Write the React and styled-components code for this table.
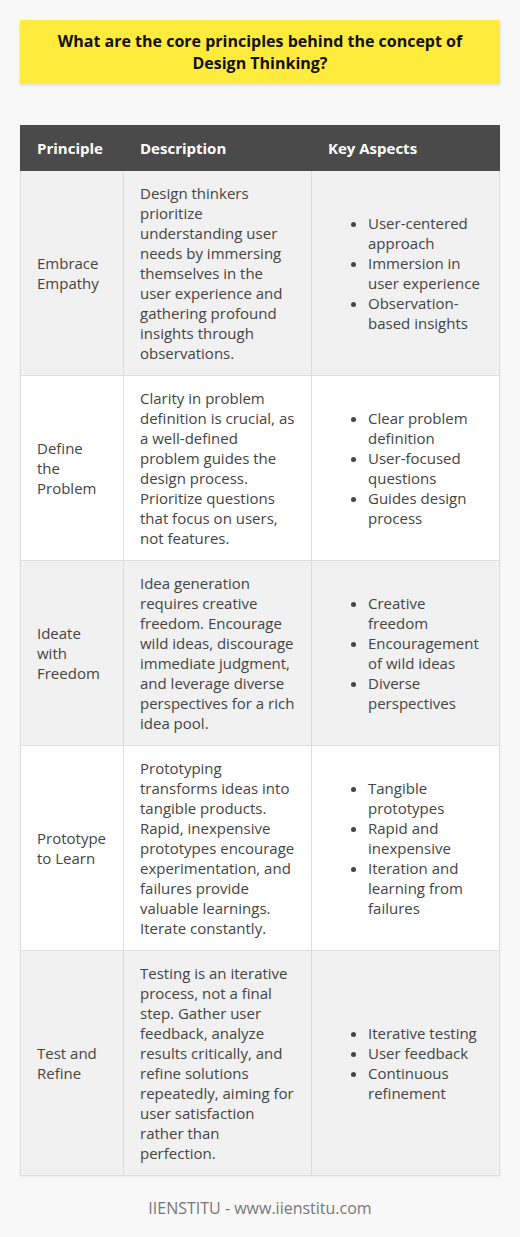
import styled, { createGlobalStyle } from "styled-components";

const GlobalStyle = createGlobalStyle`
  body {
    margin: 0;
    background: #f8f8f8;
    font-family: "Open Sans", "Liberation Sans", sans-serif;
    color: #444;
  }
`;

const Page = styled.div`
  padding: 20px 20px 0;
`;

const Title = styled.h1`
  margin: 0;
  padding: 10px 16px;
  background: #ffeb3b;
  color: #111;
  font-size: 16px;
  line-height: 22px;
  font-weight: 700;
  text-align: center;
  box-shadow: 0 1px 3px rgba(0, 0, 0, 0.12);
`;

const Table = styled.table`
  width: 100%;
  margin-top: 41px;
  border-collapse: collapse;
  font-size: 15px;
  line-height: 20px;
  box-shadow: 0 1px 3px rgba(0, 0, 0, 0.06);

  th,
  td {
    border: 1px solid #ddd;
    text-align: left;
    vertical-align: middle;
  }

  th {
    background: #4a4a4a;
    color: #fff;
    font-weight: 700;
    padding: 12px 16px;
    border-color: #4a4a4a;
    border-left-color: #e6e6e6;
  }

  th:first-child {
    border-left-color: #4a4a4a;
  }

  td {
    padding: 12px 16px;
  }
`;

const Row = styled.tr`
  background: ${(p) => (p.$shade ? "#f1f1f1" : "#fff")};
`;

const Aspects = styled.ul`
  margin: 0;
  padding-left: 40px;
`;

const Footer = styled.div`
  padding: 21px 0 20px;
  text-align: center;
  color: #777;
  font-size: 16px;
  line-height: 22px;
`;

const rows = [
  {
    principle: "Embrace Empathy",
    description:
      "Design thinkers prioritize understanding user needs by immersing themselves in the user experience and gathering profound insights through observations.",
    aspects: ["User-centered approach", "Immersion in user experience", "Observation-based insights"],
  },
  {
    principle: "Define the Problem",
    description:
      "Clarity in problem definition is crucial, as a well-defined problem guides the design process. Prioritize questions that focus on users, not features.",
    aspects: ["Clear problem definition", "User-focused questions", "Guides design process"],
  },
  {
    principle: "Ideate with Freedom",
    description:
      "Idea generation requires creative freedom. Encourage wild ideas, discourage immediate judgment, and leverage diverse perspectives for a rich idea pool.",
    aspects: ["Creative freedom", "Encouragement of wild ideas", "Diverse perspectives"],
  },
  {
    principle: "Prototype to Learn",
    description:
      "Prototyping transforms ideas into tangible products. Rapid, inexpensive prototypes encourage experimentation, and failures provide valuable learnings. Iterate constantly.",
    aspects: ["Tangible prototypes", "Rapid and inexpensive", "Iteration and learning from failures"],
  },
  {
    principle: "Test and Refine",
    description:
      "Testing is an iterative process, not a final step. Gather user feedback, analyze results critically, and refine solutions repeatedly, aiming for user satisfaction rather than perfection.",
    aspects: ["Iterative testing", "User feedback", "Continuous refinement"],
  },
];

export default function App() {
  return (
    <Page>
      <GlobalStyle />
      <Title>What are the core principles behind the concept of Design Thinking?</Title>
      <Table>
        <colgroup>
          <col style={{ width: 103 }} />
          <col style={{ width: 188 }} />
          <col />
        </colgroup>
        <thead>
          <tr>
            <th>Principle</th>
            <th>Description</th>
            <th>Key Aspects</th>
          </tr>
        </thead>
        <tbody>
          {rows.map((r, i) => (
            <Row key={r.principle} $shade={i % 2 === 0}>
              <td>{r.principle}</td>
              <td>{r.description}</td>
              <td>
                <Aspects>
                  {r.aspects.map((a) => (
                    <li key={a}>{a}</li>
                  ))}
                </Aspects>
              </td>
            </Row>
          ))}
        </tbody>
      </Table>
      <Footer>IIENSTITU - www.iienstitu.com</Footer>
    </Page>
  );
}
